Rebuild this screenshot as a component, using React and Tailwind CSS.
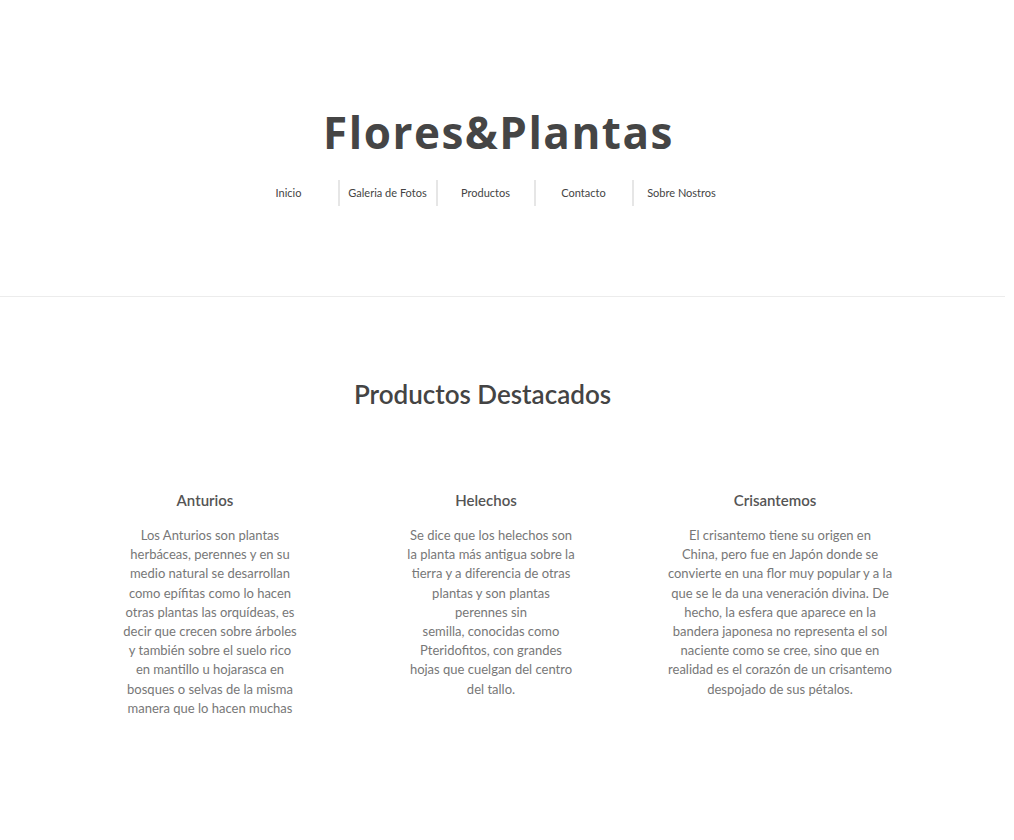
export default function App() {
  const nav = ["Inicio", "Galeria de Fotos", "Productos", "Contacto", "Sobre Nostros"];
  const cols = [
    {
      title: "Anturios",
      center: "w-[200px] ml-[105px]",
      lines: [
        "Los Anturios son plantas",
        "herbáceas, perennes y en su",
        "medio natural se desarrollan",
        "como epífitas como lo hacen",
        "otras plantas las orquídeas, es",
        "decir que crecen sobre árboles",
        "y también sobre el suelo rico",
        "en mantillo u hojarasca en",
        "bosques o selvas de la misma",
        "manera que lo hacen muchas",
      ],
    },
    {
      title: "Helechos",
      center: "w-[200px] ml-[81px]",
      lines: [
        "Se dice que los helechos son",
        "la planta más antigua sobre la",
        "tierra y a diferencia de otras",
        "plantas y son plantas",
        "perennes sin",
        "semilla, conocidas como",
        "Pteridofitos, con grandes",
        "hojas que cuelgan del centro",
        "del tallo.",
      ],
    },
    {
      title: "Crisantemos",
      center: "w-[250px] ml-[64px]",
      lines: [
        "El crisantemo tiene su origen en",
        "China, pero fue en Japón donde se",
        "convierte en una flor muy popular y a la",
        "que se le da una veneración divina. De",
        "hecho, la esfera que aparece en la",
        "bandera japonesa no representa el sol",
        "naciente como se cree, sino que en",
        "realidad es el corazón de un crisantemo",
        "despojado de sus pétalos.",
      ],
    },
  ];
  return (
    <div className="bg-white min-h-[840px] w-[1005px]" style={{ fontFamily: "Lato, 'Open Sans', sans-serif" }}>
      <header className="border-b border-[#ececec] pt-[103px] pb-[90px] flex flex-col items-center">
        <h1
          className="text-[44px] leading-[58px] font-bold text-[#454545] tracking-[1.5px] mr-[8px]"
          style={{ fontFamily: "'Open Sans', Lato, sans-serif" }}
        >
          Flores&amp;Plantas
        </h1>
        <nav className="mt-[19px] flex mr-[36px]">
          {nav.map((n, i) => (
            <div
              key={n}
              className={`w-[98px] h-[26px] flex items-center justify-center text-[11px] text-[#444] ${
                i > 0 ? "border-l-2 border-[#e6e6e6]" : ""
              }`}
            >
              {n}
            </div>
          ))}
        </nav>
      </header>
      <section className="pt-[81px]">
        <h2 className="text-center text-[26px] font-semibold text-[#444] leading-[32px] mr-[40px]">Productos Destacados</h2>
        <div className="flex mt-[80px]">
          {cols.map((c) => (
            <div key={c.title} className={`${c.center} flex flex-col items-center text-center`}>
              <h3 className="text-[15px] font-semibold text-[#555] leading-[20px]">{c.title}</h3>
              <p className="mt-[16px] pl-[10px] text-[13px] leading-[19.2px] text-[#777]">
                {c.lines.map((l, i) => (
                  <span key={i} className="block whitespace-nowrap">
                    {l}
                  </span>
                ))}
              </p>
            </div>
          ))}
        </div>
      </section>
    </div>
  );
}
